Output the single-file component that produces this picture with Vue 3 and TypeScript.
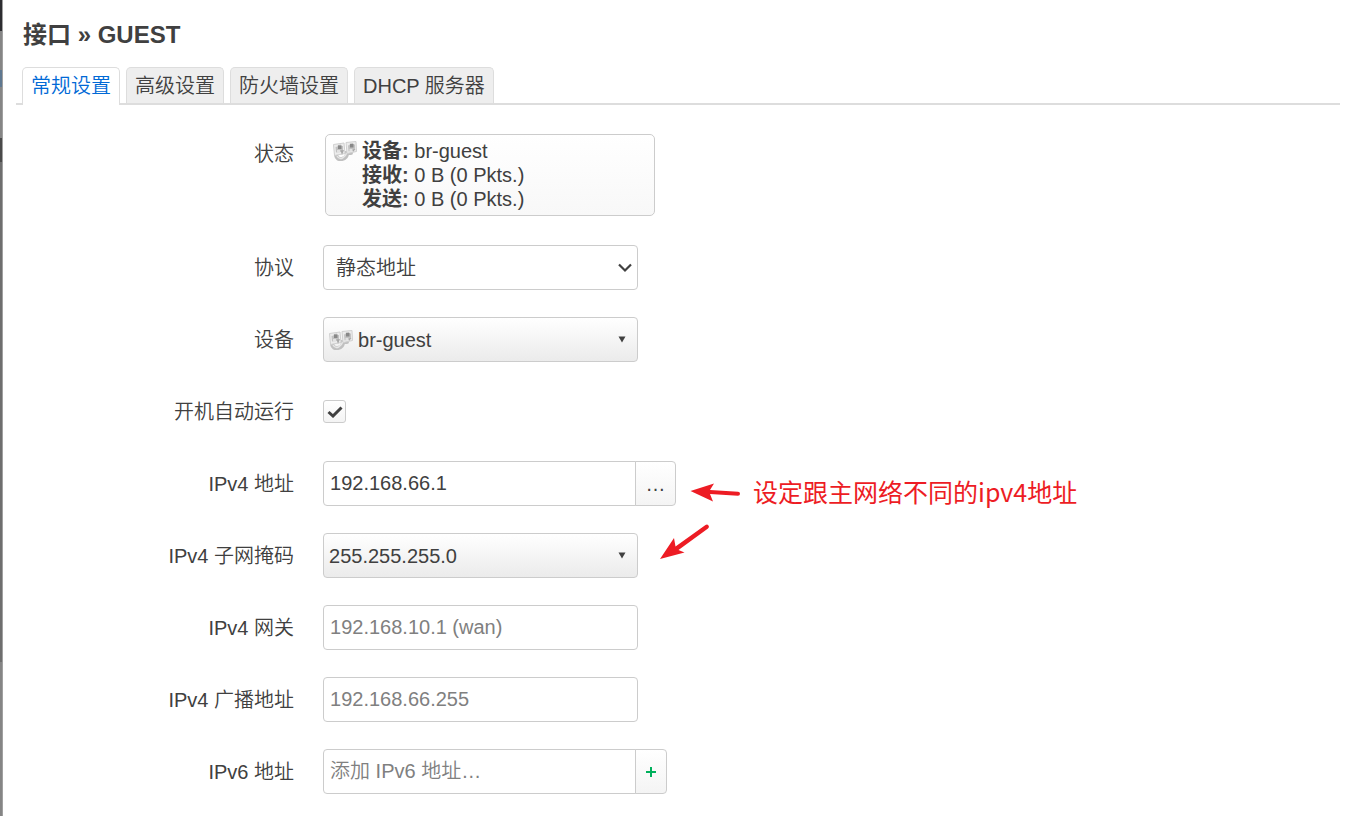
<script setup lang="ts">
import { ref } from 'vue'

const tabs: string[] = ['常规设置', '高级设置', '防火墙设置', 'DHCP 服务器']
const activeTab = ref<string>('常规设置')
const stats: { name: string; value: string }[] = [
  { name: '设备', value: 'br-guest' },
  { name: '接收', value: '0 B (0 Pkts.)' },
  { name: '发送', value: '0 B (0 Pkts.)' },
]
const autoStart = ref(true)
const address = ref('192.168.66.1')
const gateway = ref('')
const broadcast = ref('')
const address6 = ref('')
</script>

<template>
  <svg class="defs" aria-hidden="true">
    <symbol id="bridge" viewBox="0 0 24 20">
      <path d="M3 14 Q4 19 9 18 Q14 17 14 12 L18 12" fill="none" stroke="#c0c0c0" stroke-width="4" stroke-linecap="round" />
      <path d="M4 15 Q6 18.500 9.500 17 Q13 15 13.500 12" fill="none" stroke="#e6e6e6" stroke-width="1.500" />
      <path d="M0.5 3.500 L11 2 L12 12.500 L1.500 14.500 Z" fill="#ececec" stroke="#d0d0d0" />
      <path d="M13 1.500 L23 0.500 L23.500 10.500 L14 12.500 Z" fill="#ececec" stroke="#d0d0d0" />
      <path d="M2.500 6 L4.500 5.500 L5 4 L8 3.500 L8.500 5 L10 5 L10 10.500 L3 11.500 Z" fill="#c2c2c2" />
      <path d="M15 4.500 L16.500 4 L17 2.500 L20 2 L20.500 3.500 L22 3.500 L22 9 L15.500 10.500 Z" fill="#c2c2c2" />
      <path d="M5 4.500h3.500v3.500H5z M17 3h3.500v3.500h-3.500z" fill="#888" />
      <path d="M4 9h3v2.500H4z M16.500 8h3v2.500h-3z" fill="#e2e2e2" />
      <path d="M7.500 9.500 L11 9 L9 14 Z M19.500 8.500 L22.500 8 L20 11 Z" fill="#a8a8a8" />
    </symbol>
  </svg>
  <div class="page">
    <div class="backdrop"></div>
    <main class="modal">
      <h1>接口 » GUEST</h1>
      <nav class="tabs">
        <button
          v-for="t in tabs"
          :key="t"
          type="button"
          :class="['tab', { active: t === activeTab }]"
          @click="activeTab = t"
        >{{ t }}</button>
      </nav>
      <form class="form" @submit.prevent>
        <div class="row status-row">
          <span class="label">状态</span>
          <div class="status">
            <svg class="bridge"><use href="#bridge" /></svg>
            <div>
              <div v-for="s in stats" :key="s.name"><strong>{{ s.name }}:</strong> {{ s.value }}</div>
            </div>
          </div>
        </div>
        <div class="row">
          <label class="label" for="proto">协议</label>
          <div class="select-wrap">
            <select id="proto" class="control select"><option>静态地址</option></select>
            <svg class="chevron" viewBox="0 0 14 10"><path d="M1 1.500 L7 7.500 L13 1.500" fill="none" stroke="#404040" stroke-width="2.200" /></svg>
          </div>
        </div>
        <div class="row">
          <span id="device-label" class="label">设备</span>
          <button type="button" class="control dropdown" aria-labelledby="device-label">
            <svg class="bridge"><use href="#bridge" /></svg>
            <span class="value">br-guest</span>
            <svg class="arrow" viewBox="0 0 8 7"><path d="M0.5 0.5h7L4 6.5z" fill="#404040" /></svg>
          </button>
        </div>
        <div class="row">
          <label class="label" for="auto">开机自动运行</label>
          <div class="check-wrap">
            <input id="auto" v-model="autoStart" type="checkbox" class="check" />
            <svg v-if="autoStart" class="tick" viewBox="0 0 16 12"><path d="M1.5 6 L6 10 L14.5 1.5" fill="none" stroke="#404040" stroke-width="3" /></svg>
          </div>
        </div>
        <div class="row">
          <label class="label" for="ip4">IPv4 地址</label>
          <div class="group">
            <input id="ip4" v-model="address" class="control text joined" type="text" />
            <button type="button" class="addon more">…</button>
            <div class="note">
              <svg class="arrows" viewBox="0 0 82 80">
                <path d="M30.500 11 L54 3.500 L50 10 L78 11.800 A2 2 0 0 1 78 15.800 L50 14 L53 21.500 Z" fill="#ed1c24" />
                <path d="M0 79 L14 58 L15.500 66.500 L45.500 45 A2 2 0 0 1 48 48.500 L18.500 70 L24.500 72.500 Z" fill="#ed1c24" />
              </svg>
              <span>设定跟主网络不同的ipv4地址</span>
            </div>
          </div>
        </div>
        <div class="row">
          <span id="mask-label" class="label">IPv4 子网掩码</span>
          <button type="button" class="control dropdown" aria-labelledby="mask-label">
            <span class="value">255.255.255.0</span>
            <svg class="arrow" viewBox="0 0 8 7"><path d="M0.5 0.5h7L4 6.5z" fill="#404040" /></svg>
          </button>
        </div>
        <div class="row">
          <label class="label" for="gw">IPv4 网关</label>
          <input id="gw" v-model="gateway" class="control text" type="text" placeholder="192.168.10.1 (wan)" />
        </div>
        <div class="row">
          <label class="label" for="bc">IPv4 广播地址</label>
          <input id="bc" v-model="broadcast" class="control text" type="text" placeholder="192.168.66.255" />
        </div>
        <div class="row">
          <label class="label" for="ip6">IPv6 地址</label>
          <div class="group">
            <input id="ip6" v-model="address6" class="control text joined" type="text" placeholder="添加 IPv6 地址…" />
            <button type="button" class="addon add" aria-label="添加">
              <svg class="plus" viewBox="0 0 10 10"><path d="M5 0V10M0 5H10" stroke="#00b05c" stroke-width="2" /></svg>
            </button>
          </div>
        </div>
      </form>
    </main>
  </div>
</template>

<style>
body {
  margin: 0;
  overflow: hidden;
}
</style>

<style scoped>
* {
  box-sizing: border-box;
}
.defs {
  position: absolute;
  width: 0;
  height: 0;
}
.page {
  display: flex;
  min-height: 100vh;
  background: #fff;
  color: #404040;
  font-family: "Liberation Sans", "Noto Sans CJK SC", sans-serif;
  font-size: 20px;
  font-weight: 350;
  line-height: 24px;
}
.backdrop {
  width: 3px;
  background: linear-gradient(#2c2c30 0 31px, #858585 31px 70px, #5f7890 70px 87px, #858585 87px 138px, #4a4a4a 138px 162px, #6e6e6e 162px 662px, #858585 662px);
  border-right: 1px solid #a0a0a0;
}
.modal {
  flex: 1;
  min-width: 0;
  padding: 20px 10px 0 13px;
}
h1 {
  margin: 0 0 17px 7px;
  font-size: 24px;
  line-height: 30px;
}
strong {
  font-weight: 700;
}
.tabs {
  display: flex;
  gap: 6px;
  padding: 0 6px;
  border-bottom: 2px solid #ddd;
}
.tab {
  height: 36px;
  padding: 0 8px;
  border: 1px solid #ddd;
  border-bottom: 0;
  border-radius: 5px 5px 0 0;
  background: #eee;
  color: #404040;
  font: inherit;
}
.tab.active {
  height: 38px;
  margin-bottom: -2px;
  padding-bottom: 2px;
  background: #fff;
  color: #0069d6;
}
.form {
  display: flex;
  flex-direction: column;
  gap: 27px;
  padding-top: 29px;
}
.row {
  display: grid;
  grid-template-columns: 21% 1fr;
  column-gap: 29px;
  align-items: center;
  justify-items: start;
  min-height: 45px;
}
.label {
  justify-self: end;
}
.status-row {
  align-items: start;
  margin-bottom: 2px;
}
.status-row .label {
  padding-top: 8px;
}
.status {
  display: flex;
  gap: 5px;
  width: 330px;
  height: 82px;
  margin-left: 2px;
  padding: 4px 7px;
  border: 1px solid #ccc;
  border-radius: 5px;
  background: linear-gradient(#fff, #f8f8f8);
}
.bridge {
  width: 24px;
  height: 20px;
  flex: none;
}
.status .bridge {
  margin-top: 2px;
}
.control {
  width: 315px;
  height: 45px;
  border: 1px solid #ccc;
  border-radius: 4px;
  background: #fff;
  color: #404040;
  font: inherit;
  outline: none;
}
.text {
  padding: 0 6px;
}
.text::placeholder {
  color: #808080;
}
.select-wrap,
.check-wrap {
  display: grid;
  align-items: center;
}
.select-wrap > *,
.check-wrap > * {
  grid-area: 1 / 1;
}
.select {
  appearance: none;
  padding: 0 12px;
}
.chevron {
  width: 14px;
  height: 10px;
  margin-right: 6px;
  justify-self: end;
  pointer-events: none;
}
.dropdown {
  display: flex;
  align-items: center;
  gap: 5px;
  padding: 0 11px 0 5px;
  background: linear-gradient(#fff, #ebebeb);
  text-align: left;
}
.value {
  flex: 1;
}
.arrow {
  width: 8px;
  height: 7px;
}
.check {
  appearance: none;
  width: 23px;
  height: 23px;
  margin: 0;
  border: 1px solid #ccc;
  border-radius: 3px;
  background: linear-gradient(#fff, #f4f4f4);
}
.tick {
  width: 16px;
  height: 12px;
  justify-self: center;
  pointer-events: none;
}
.group {
  position: relative;
  display: flex;
}
.joined {
  width: 313px;
  border-radius: 4px 0 0 4px;
}
.addon {
  height: 45px;
  margin-left: -1px;
  padding: 0;
  border: 1px solid #ccc;
  border-radius: 0 4px 4px 0;
  background: linear-gradient(#fff, #f4f4f4);
  color: #404040;
  font: inherit;
}
.more {
  width: 41px;
}
.add {
  width: 32px;
  display: grid;
  place-items: center;
}
.plus {
  width: 10px;
  height: 10px;
}
.note {
  position: absolute;
  left: 337px;
  top: 19px;
  display: flex;
  gap: 11px;
  color: #ed1c24;
  font-family: "Noto Sans CJK SC", sans-serif;
  font-size: 25px;
  font-weight: 400;
  line-height: 22px;
  white-space: nowrap;
  pointer-events: none;
}
.arrows {
  width: 82px;
  height: 80px;
}
</style>
